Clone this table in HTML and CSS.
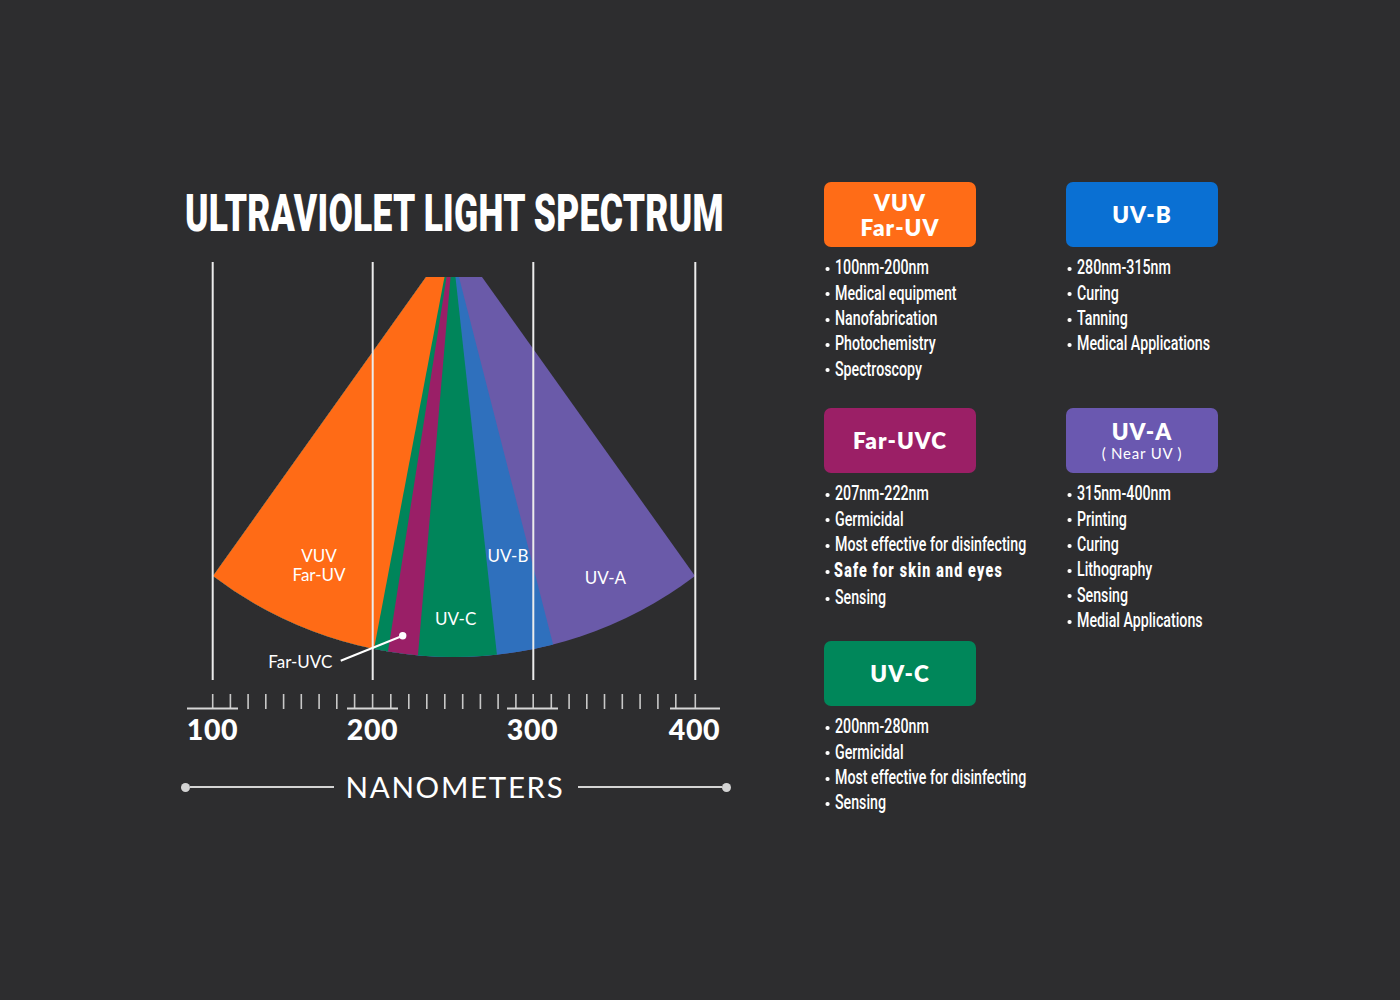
FILE: index.html
```html
<!DOCTYPE html>
<html lang="en">
<head>
<meta charset="utf-8">
<title>Ultraviolet Light Spectrum</title>
<link rel="stylesheet" href="styles.css">
</head>
<body>
<main class="page">
  <section class="chart">
    <h1 class="title">ULTRAVIOLET LIGHT SPECTRUM</h1>
    <svg class="diagram" viewBox="180 244 555 506" width="555" height="506">
      <defs>
        <clipPath id="fan">
          <path d="M426 277 L213 576 A399 399 0 0 0 695 576 L482 277 Z"/>
        </clipPath>
      </defs>
      <g clip-path="url(#fan)">
        <rect x="180" y="244" width="555" height="506" class="c-uva"/>
        <polygon class="c-uvb" points="180,260 454.6,260 567.3,700 180,700"/>
        <polygon class="c-uvc" points="180,260 453.6,260 501.9,700 180,700"/>
        <polygon class="c-far" points="180,260 452,260 414.1,700 180,700"/>
        <polygon class="c-uvc" points="180,260 449.2,260 380.4,700 180,700"/>
        <polygon class="c-vuv" points="180,260 447.7,260 364.3,700 180,700"/>
      </g>
      <path class="grid-line" d="M212.7 262 V680 M372.7 262 V680 M533.3 262 V680 M695.3 262 V680"/>
      <text class="seg-label" x="319" y="561.7" text-anchor="middle">VUV</text>
      <text class="seg-label" x="319" y="580.7" text-anchor="middle">Far-UV</text>
      <text class="seg-label" x="508" y="562.3" text-anchor="middle">UV-B</text>
      <text class="seg-label" x="605.3" y="584.3" text-anchor="middle">UV-A</text>
      <text class="seg-label" x="455.7" y="625" text-anchor="middle">UV-C</text>
      <text class="seg-label" x="268.3" y="668.3">Far-UVC</text>
      <path class="leader" d="M340.7 660.7 L402.7 635.7"/>
      <circle class="leader-dot" cx="402.7" cy="635.7" r="3.7"/>
      <path class="ticks" d="M212.7 694V709 M230.4 694V709 M248.1 694V709 M265.8 694V709 M283.6 694V709 M301.3 694V709 M319.1 694V709 M336.8 694V709 M354.6 694V709 M372.6 694V709 M390.8 694V709 M408.8 694V709 M426.8 694V709 M444.8 694V709 M462.7 694V709 M480.4 694V709 M498.1 694V709 M515.9 694V709 M533.2 694V709 M551.3 694V709 M569.1 694V709 M586.8 694V709 M604.5 694V709 M622.3 694V709 M640.1 694V709 M657.9 694V709 M675.8 694V709 M695.3 694V709"/>
      <path class="baseline" d="M187 708.5 H238 M347 708.5 H398 M507 708.5 H558 M670 708.5 H720"/>
      <text class="axis-num" x="212.5" y="739.5" text-anchor="middle">100</text>
      <text class="axis-num" x="372.5" y="739.5" text-anchor="middle">200</text>
      <text class="axis-num" x="532.5" y="739.5" text-anchor="middle">300</text>
      <text class="axis-num" x="694.5" y="739.5" text-anchor="middle">400</text>
    </svg>
    <div class="axis-title">
      <span class="dot"></span>
      <span class="rule"></span>
      <span class="nm">NANOMETERS</span>
      <span class="rule"></span>
      <span class="dot"></span>
    </div>
  </section>

  <section class="legend">
    <div class="group">
      <div class="card vuv"><span>VUV</span><span>Far-UV</span></div>
      <ul class="items">
        <li>100nm-200nm</li>
        <li>Medical equipment</li>
        <li>Nanofabrication</li>
        <li>Photochemistry</li>
        <li>Spectroscopy</li>
      </ul>
    </div>
    <div class="group">
      <div class="card uvb"><span>UV-B</span></div>
      <ul class="items">
        <li>280nm-315nm</li>
        <li>Curing</li>
        <li>Tanning</li>
        <li>Medical Applications</li>
      </ul>
    </div>
    <div class="group">
      <div class="card far"><span>Far-UVC</span></div>
      <ul class="items">
        <li>207nm-222nm</li>
        <li>Germicidal</li>
        <li>Most effective for disinfecting</li>
        <li class="strong">Safe for skin and eyes</li>
        <li class="after-strong">Sensing</li>
      </ul>
    </div>
    <div class="group">
      <div class="card uva"><span>UV-A</span><span class="sub">( Near UV )</span></div>
      <ul class="items">
        <li>315nm-400nm</li>
        <li>Printing</li>
        <li>Curing</li>
        <li>Lithography</li>
        <li>Sensing</li>
        <li>Medial Applications</li>
      </ul>
    </div>
    <div class="group">
      <div class="card uvc"><span>UV-C</span></div>
      <ul class="items">
        <li>200nm-280nm</li>
        <li>Germicidal</li>
        <li>Most effective for disinfecting</li>
        <li>Sensing</li>
      </ul>
    </div>
  </section>
</main>
</body>
</html>
```

FILE: styles.css
```css
html, body {
  margin: 0;
  padding: 0;
  background: #2d2d2f;
  color: #fff;
}

body {
  width: 1400px;
  height: 1000px;
  overflow: hidden;
  font-family: "Lato", "Liberation Sans", sans-serif;
}

.page {
  display: flex;
  align-items: flex-start;
  padding: 182px 0 0 180px;
  gap: 89px;
}

/* ---------- chart column ---------- */
.chart {
  width: 555px;
  display: flex;
  flex-direction: column;
}

.title {
  margin: 2px 0 0 5px;
  height: 60px;
  font-family: "Roboto", "Liberation Sans", sans-serif;
  font-weight: 900;
  font-size: 51px;
  line-height: 60px;
  letter-spacing: 0.4px;
  white-space: nowrap;
  transform: scaleX(0.694);
  transform-origin: 0 0;
  color: #fff;
}

.diagram {
  display: block;
}

.c-vuv { fill: #ff6b16; }
.c-far { fill: #9a1f67; }
.c-uvc { fill: #00855a; }
.c-uvb { fill: #2f70bd; }
.c-uva { fill: #6a5aa9; }

.grid-line {
  stroke: #ececec;
  stroke-width: 2;
  fill: none;
}

.ticks {
  stroke: #c8c8c8;
  stroke-width: 1.6;
  fill: none;
}

.baseline {
  stroke: #d6d6d6;
  stroke-width: 2;
  fill: none;
}

.seg-label {
  font-family: "Lato", "Liberation Sans", sans-serif;
  font-size: 17px;
  fill: #fff;
}

.leader {
  stroke: #fff;
  stroke-width: 2;
  fill: none;
}

.leader-dot { fill: #fff; }

.axis-num {
  font-family: "Lato", "Liberation Sans", sans-serif;
  font-weight: 900;
  font-size: 28.5px;
  letter-spacing: 0.6px;
  fill: #fff;
}

.axis-title {
  display: flex;
  align-items: center;
  width: 550px;
  margin: 17px 0 0 0.5px;
  height: 40px;
}

.axis-title .dot {
  width: 9px;
  height: 9px;
  border-radius: 50%;
  background: #d4d4d4;
  flex: none;
}

.axis-title .rule {
  flex: 1;
  height: 2px;
  background: #d4d4d4;
}

.axis-title .nm {
  margin: 0 13px 0 12px;
  font-family: "Lato", "Liberation Sans", sans-serif;
  font-size: 29.5px;
  font-weight: 400;
  letter-spacing: 1.7px;
  line-height: 40px;
  color: #fff;
}

/* ---------- legend column ---------- */
.legend {
  display: grid;
  grid-template-columns: 242px auto;
  grid-template-rows: 226px 233px auto;
}

.card {
  width: 152px;
  height: 65px;
  border-radius: 7px;
  display: flex;
  flex-direction: column;
  align-items: center;
  justify-content: center;
  font-family: "Lato", "Liberation Sans", sans-serif;
  font-weight: 800;
  font-size: 22.5px;
  line-height: 25px;
  letter-spacing: 1px;
  color: #fff;
}

.card .sub {
  font-weight: 400;
  font-size: 15px;
  line-height: 18px;
  letter-spacing: 0.8px;
}

.card.vuv { background: #ff6c17; }
.card.uvb { background: #0a70d3; }
.card.far { background: #9b1f66; }
.card.uva { background: #6a58b0; }
.card.uvc { background: #00875a; }

.items {
  list-style: none;
  margin: 8.4px 0 0 0;
  padding: 0;
  font-family: "Roboto", "Liberation Sans", sans-serif;
  font-weight: 500;
  font-size: 20px;
  line-height: 25.3px;
  white-space: nowrap;
  transform: scaleX(0.71);
  transform-origin: 0 0;
  color: #fff;
}

.items li::before {
  content: "";
  display: inline-block;
  width: 5.7px;
  height: 4px;
  border-radius: 50%;
  background: #fff;
  margin: 0 7.8px 0 2px;
  vertical-align: middle;
}

.items li.strong {
  font-weight: 900;
  letter-spacing: 1.7px;
  line-height: 27px;
}

.items li.strong::before {
  margin-right: 6.5px;
}

.items li.after-strong {
  line-height: 27px;
}
```
